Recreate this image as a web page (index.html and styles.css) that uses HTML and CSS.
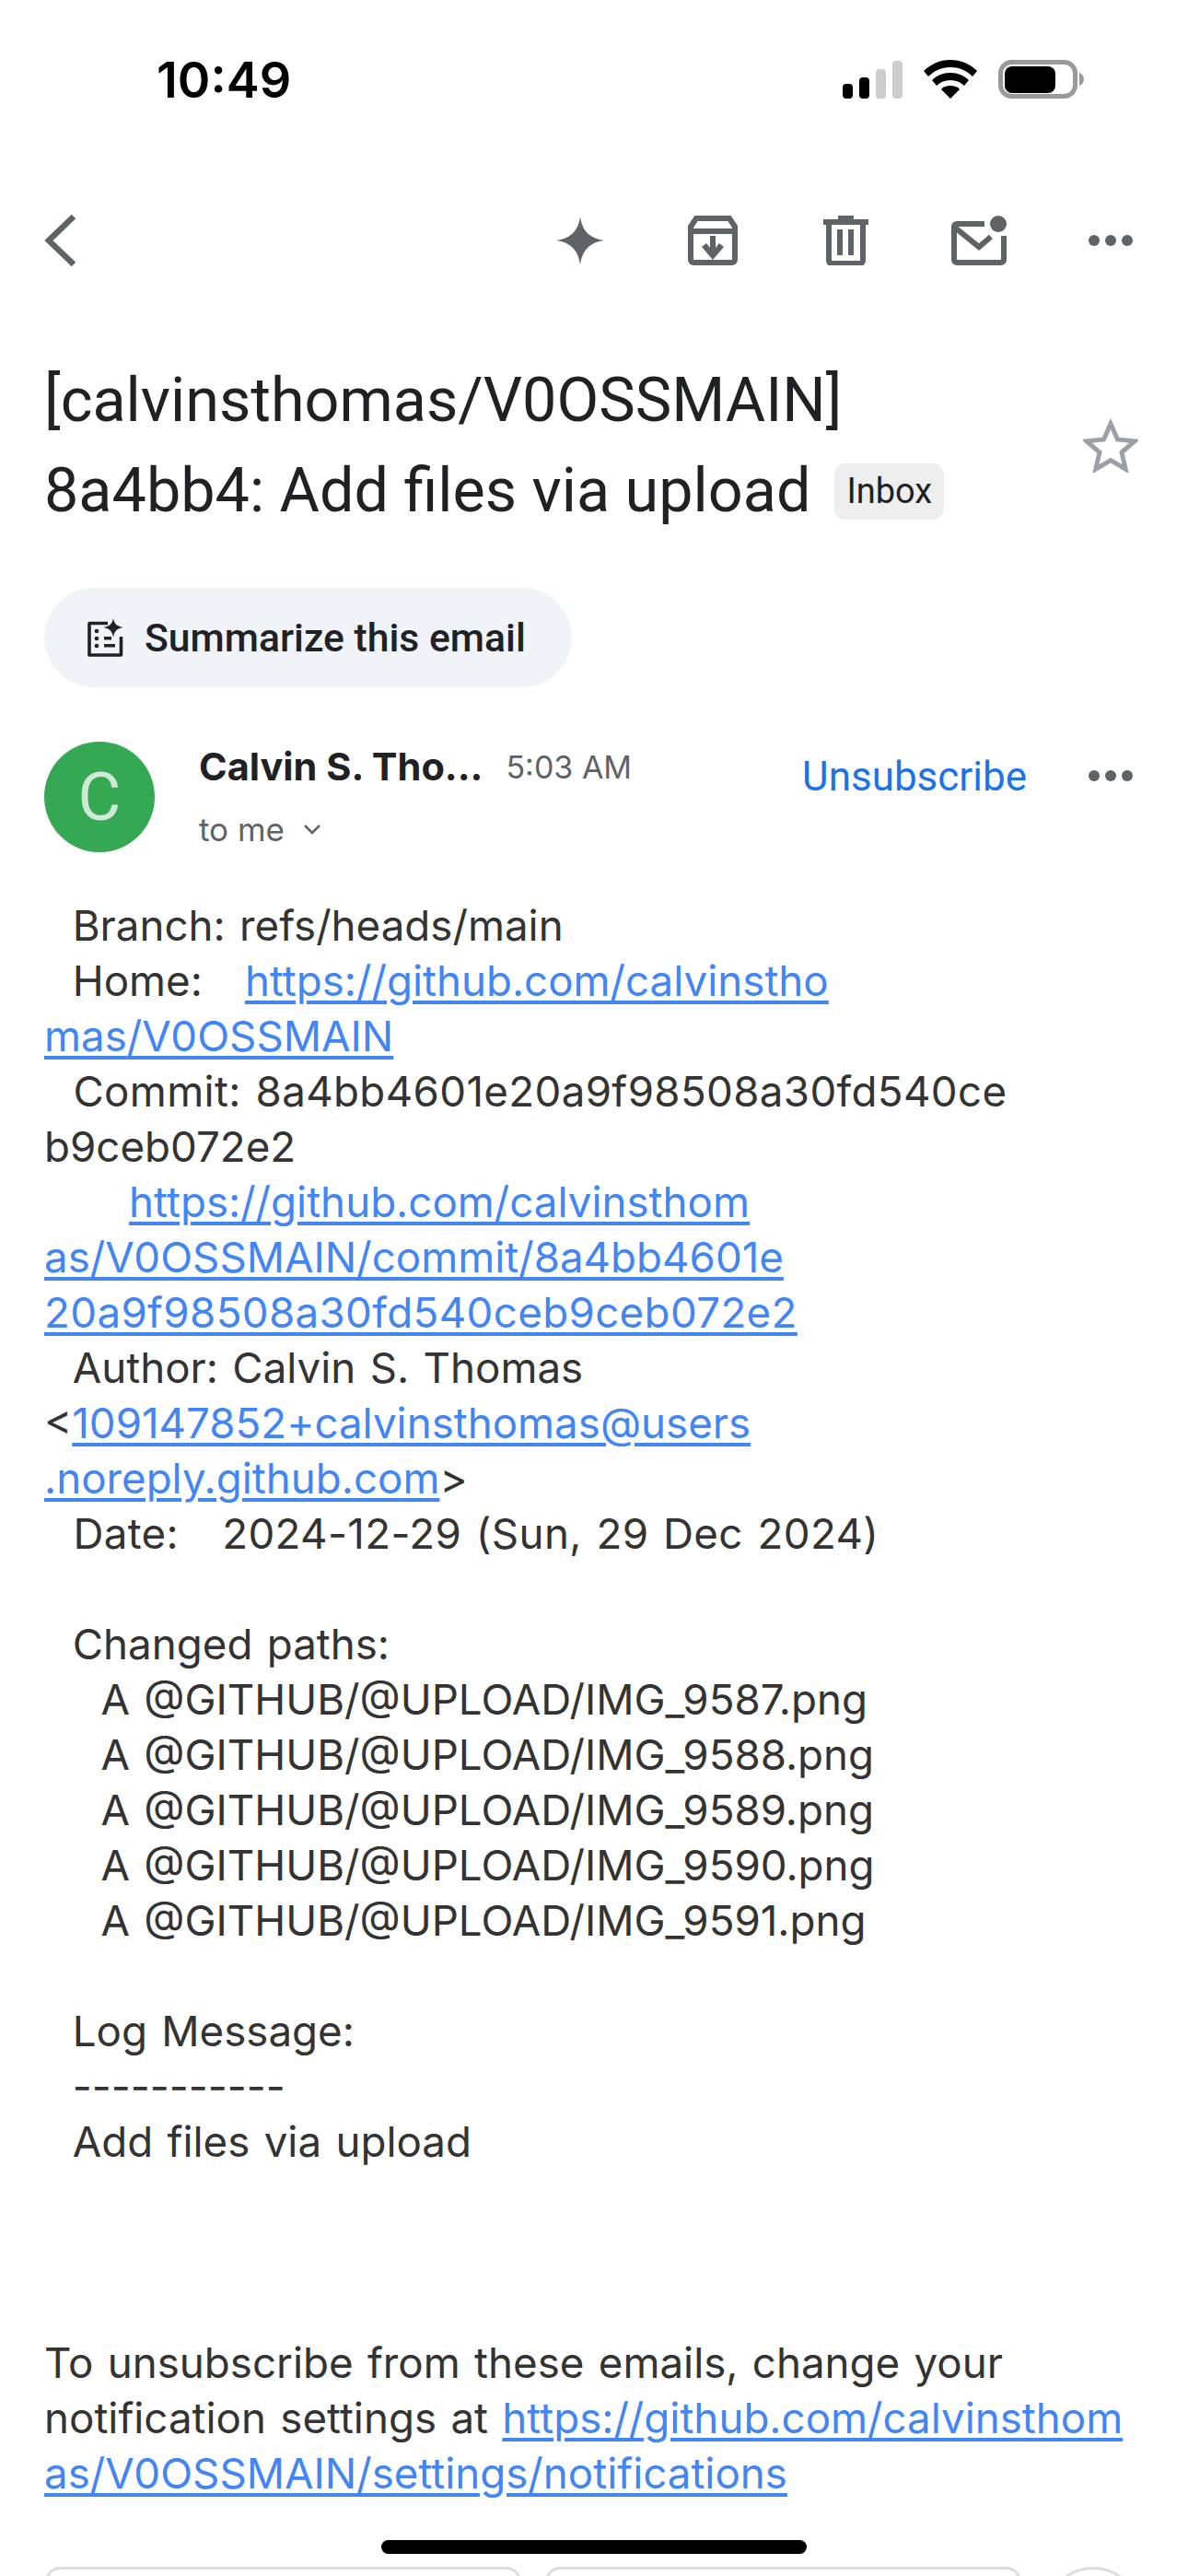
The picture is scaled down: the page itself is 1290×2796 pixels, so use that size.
FILE: index.html

```html
<!DOCTYPE html>
<html lang="en">
<head>
    <meta charset="UTF-8">
    <meta name="viewport" content="width=device-width, initial-scale=1.0">
    <title>[calvinsthomas/V0OSSMAIN] 8a4bb4: Add files via upload</title>
    <link rel="stylesheet" href="styles.css">
</head>
<body>
    <div class="status-bar">
        <span class="clock">10:49</span>
        <div class="status-icons">
            <svg class="signal" width="65" height="41" viewBox="0 0 65 41">
                <rect x="0" y="25" width="11" height="16" rx="4" fill="#000"/>
                <rect x="18" y="18" width="11" height="23" rx="4" fill="#000"/>
                <rect x="36" y="9" width="11" height="32" rx="4" fill="#ccc"/>
                <rect x="54" y="0" width="11" height="41" rx="4" fill="#ccc"/>
            </svg>
            <svg class="wifi" width="58" height="42" viewBox="0 0 58 42">
                <path d="M29 0C18 0 8 4 0 12l5 6C12 11 20 8 29 8s17 3 24 10l5-6C50 4 40 0 29 0z" fill="#000"/>
                <path d="M29 14c-8 0-15 3-20 8l5 6c4-4 9-6 15-6s11 2 15 6l5-6c-5-5-12-8-20-8z" fill="#000"/>
                <path d="M29 28c-4 0-8 1-10 4l10 10 10-10c-2-3-6-4-10-4z" fill="#000"/>
            </svg>
            <svg class="battery" width="93" height="42" viewBox="0 0 93 42">
                <rect x="2.5" y="2.5" width="81" height="37" rx="12" fill="none" stroke="#999" stroke-width="5"/>
                <rect x="7" y="7" width="55" height="29" rx="8" fill="#000"/>
                <path d="M88 14c3 1 5 4 5 7s-2 6-5 7z" fill="#999"/>
            </svg>
        </div>
    </div>

    <div class="toolbar">
        <svg class="back" width="35" height="58" viewBox="0 0 35 58">
            <path d="M32 3L5 29l27 26" fill="none" stroke="#5f6368" stroke-width="6.5"/>
        </svg>
        <div class="toolbar-actions">
            <span class="tool">
                <svg width="52" height="52" viewBox="0 0 52 52"><path d="M26 0c2 15 10 24 26 26-16 2-24 11-26 26-2-15-10-24-26-26 16-2 24-11 26-26z" fill="#5f6368"/></svg>
            </span>
            <span class="tool">
                <svg width="54" height="54" viewBox="0 0 54 54">
                    <path d="M3 12L9 3h36l6 9v36a3 3 0 0 1-3 3H6a3 3 0 0 1-3-3z" fill="none" stroke="#5f6368" stroke-width="6"/>
                    <path d="M3 17h48" stroke="#5f6368" stroke-width="6"/>
                    <path d="M24 22h6v13l4-5 5 4-12 14-12-14 5-4 4 5z" fill="#5f6368"/>
                </svg>
            </span>
            <span class="tool">
                <svg width="49" height="54" viewBox="0 0 49 54">
                    <path d="M16 0h17v4h16v6H0V4h16z" fill="#5f6368"/>
                    <path d="M6 9v40a3 3 0 0 0 3 3h31a3 3 0 0 0 3-3V9" fill="none" stroke="#5f6368" stroke-width="6"/>
                    <path d="M15 15h6v28h-6zM27 15h6v28h-6z" fill="#5f6368"/>
                </svg>
            </span>
            <span class="tool">
                <svg width="60" height="54" viewBox="0 0 60 54">
                    <path d="M36 9H6a3 3 0 0 0-3 3v36a3 3 0 0 0 3 3h48a3 3 0 0 0 3-3V22" fill="none" stroke="#5f6368" stroke-width="6"/>
                    <path d="M4 13l26 21 13-11" fill="none" stroke="#5f6368" stroke-width="6"/>
                    <circle cx="51" cy="9" r="9" fill="#5f6368"/>
                </svg>
            </span>
            <span class="tool tool-last">
                <svg width="48" height="12" viewBox="0 0 48 12"><circle cx="6" cy="6" r="6" fill="#5f6368"/><circle cx="24" cy="6" r="6" fill="#5f6368"/><circle cx="42" cy="6" r="6" fill="#5f6368"/></svg>
            </span>
        </div>
    </div>

    <div class="subject-row">
        <h1 class="subject">[calvinsthomas/V0OSSMAIN]<br>8a4bb4: Add files via upload<span class="chip">Inbox</span></h1>
        <svg class="star" width="60" height="58" viewBox="0 0 60 58">
            <path d="M30 5l7.5 17 18.500 1.800-14 12.200 4.200 18.200L30 44.600 13.800 54.200 18 36 4 23.800 22.500 22z" fill="none" stroke="#9aa0a6" stroke-width="5"/>
        </svg>
    </div>

    <div class="summary">
        <svg width="40" height="42" viewBox="0 0 40 42">
            <path d="M22 5.500H2v34.500h34.500V20" fill="none" stroke="#202124" stroke-width="3.600" stroke-linejoin="round"/>
            <circle cx="10" cy="14" r="2.300" fill="#202124"/>
            <circle cx="10" cy="22" r="2.300" fill="#202124"/>
            <circle cx="10" cy="30" r="2.300" fill="#202124"/>
            <path d="M18 20h8v3.600h-8zM18 28h12v3.600H18z" fill="#202124"/>
            <path d="M28 0c1 6 4 9 11 10-7 1-10 4-11 11-1-7-4-10-11-11 7-1 10-4 11-10z" fill="#202124"/>
        </svg>
        <span>Summarize this email</span>
    </div>

    <div class="sender">
        <div class="avatar">C</div>
        <div class="sender-info">
            <div class="sender-top">
                <span class="sender-name">Calvin S. Tho...</span>
                <span class="sender-time">5:03 AM</span>
            </div>
            <div class="sender-to">to me
                <svg width="20" height="12" viewBox="0 0 20 12"><path d="M2 2l8 8 8-8" fill="none" stroke="#5f6368" stroke-width="2.500"/></svg>
            </div>
        </div>
        <a class="unsubscribe">Unsubscribe</a>
        <svg class="more" width="48" height="12" viewBox="0 0 48 12"><circle cx="6" cy="6" r="6" fill="#5f6368"/><circle cx="24" cy="6" r="6" fill="#5f6368"/><circle cx="42" cy="6" r="6" fill="#5f6368"/></svg>
    </div>

    <div class="message">
        <div class="line">  Branch: refs/heads/main</div>
        <div class="line">  Home:   <a>https://github.com/calvinstho</a></div>
        <div class="line"><a>mas/V0OSSMAIN</a></div>
        <div class="line digits">  Commit: 8a4bb4601e20a9f98508a30fd540ce</div>
        <div class="line">b9ceb072e2</div>
        <div class="line">      <a>https://github.com/calvinsthom</a></div>
        <div class="line"><a>as/V0OSSMAIN/commit/8a4bb4601e</a></div>
        <div class="line digits"><a>20a9f98508a30fd540ceb9ceb072e2</a></div>
        <div class="line">  Author: Calvin S. Thomas</div>
        <div class="line">&lt;<a>109147852+calvinsthomas@users</a></div>
        <div class="line"><a>.noreply.github.com</a>&gt;</div>
        <div class="line digits">  Date:   2024-12-29 (Sun, 29 Dec 2024)</div>
        <div class="line"></div>
        <div class="line">  Changed paths:</div>
        <div class="line">    A @GITHUB/@UPLOAD/IMG_9587.png</div>
        <div class="line">    A @GITHUB/@UPLOAD/IMG_9588.png</div>
        <div class="line">    A @GITHUB/@UPLOAD/IMG_9589.png</div>
        <div class="line">    A @GITHUB/@UPLOAD/IMG_9590.png</div>
        <div class="line">    A @GITHUB/@UPLOAD/IMG_9591.png</div>
        <div class="line"></div>
        <div class="line">  Log Message:</div>
        <div class="line">  -----------</div>
        <div class="line">  Add files via upload</div>
        <div class="line"></div>
        <div class="line"></div>
        <div class="line"></div>
        <div class="line">To unsubscribe from these emails, change your</div>
        <div class="line">notification settings at <a>https://github.com/calvinsthom</a></div>
        <div class="line"><a>as/V0OSSMAIN/settings/notifications</a></div>
    </div>

    <div class="reply-row">
        <div class="reply-btn"></div>
        <div class="reply-btn"></div>
        <div class="emoji-btn"></div>
    </div>

    <div class="home-bar"></div>
</body>
</html>
```

FILE: styles.css

```css
html, body {
    margin: 0;
    padding: 0;
}
body {
    position: relative;
    width: 1290px;
    height: 2796px;
    overflow: hidden;
    background-color: white;
    font-family: "Inter", Arial, sans-serif;
    color: #202124;
}
.status-bar {
    display: flex;
    justify-content: space-between;
    align-items: center;
    height: 84px;
    padding: 44px 113px 0 170px;
}
.clock {
    font-size: 54px;
    font-weight: 600;
    color: #000;
}
.status-icons {
    display: flex;
    align-items: center;
}
.wifi {
    margin-left: 23px;
}
.battery {
    margin-left: 23px;
}
.toolbar {
    display: flex;
    justify-content: space-between;
    align-items: center;
    height: 62px;
    margin-top: 102px;
    padding: 0 10px 0 48px;
}
.toolbar-actions {
    display: flex;
    align-items: center;
}
.tool {
    display: flex;
    justify-content: center;
    align-items: center;
    width: 144.5px;
    box-sizing: border-box;
}
.tool-last {
    padding-right: 3px;
}
.subject-row {
    display: flex;
    justify-content: space-between;
    margin-top: 93px;
    padding: 0 54px 0 48px;
}
.star {
    margin-top: 70px;
}
.subject {
    margin: 0;
    font-family: "Roboto", sans-serif;
    font-size: 66.500px;
    font-weight: 400;
    line-height: 98px;
    color: #202124;
}
.chip {
    display: inline-block;
    margin-left: 26px;
    padding: 0 13px;
    background-color: #eee;
    border-radius: 12px;
    font-size: 38px;
    line-height: 61px;
    vertical-align: 9px;
}
.summary {
    display: inline-flex;
    align-items: center;
    gap: 22px;
    height: 108px;
    margin: 57px 0 0 48px;
    padding: 0 50px 0 47px;
    background-color: #f0f4f9;
    border-radius: 54px;
    font-family: "Roboto", sans-serif;
    font-size: 42.700px;
    font-weight: 500;
}
.sender {
    display: flex;
    align-items: flex-start;
    margin-top: 59px;
    padding: 0 60px 0 48px;
}
.avatar {
    display: flex;
    justify-content: center;
    align-items: center;
    width: 120px;
    height: 120px;
    border-radius: 50%;
    background-color: #34a853;
    color: #cfe9d6;
    font-family: "Roboto", sans-serif;
    font-size: 72px;
}
.sender-info {
    flex: 1;
    margin-left: 48px;
}
.sender-top {
    display: flex;
    align-items: center;
    gap: 25px;
    height: 54px;
}
.sender-name {
    font-size: 41.500px;
    font-weight: 700;
}
.sender-time {
    font-size: 34px;
    color: #5f6368;
}
.sender-to {
    display: flex;
    align-items: center;
    gap: 20px;
    margin-top: 20px;
    font-size: 35px;
    color: #5f6368;
}
.unsubscribe {
    margin-top: 12px;
    font-family: "Roboto", sans-serif;
    font-size: 44px;
    font-weight: 400;
    color: #1a73e8;
}
.more {
    margin: 31px 0 0 67px;
}
.message {
    margin-top: 50px;
    padding-left: 48px;
    font-size: 45.700px;
    word-spacing: 2.500px;
    color: #333;
}
.line {
    height: 60px;
    line-height: 60px;
    white-space: pre;
}
.digits {
    letter-spacing: 0.35px;
}
.message a {
    color: #4285f4;
    text-decoration: underline;
    text-decoration-thickness: 4px;
    text-underline-offset: 5px;
}
.reply-row {
    position: absolute;
    top: 2786px;
    left: 49px;
    display: flex;
    gap: 26px;
}
.reply-btn {
    width: 517px;
    height: 110px;
    box-sizing: border-box;
    border: 3px solid #dadce0;
    border-radius: 16px;
}
.emoji-btn {
    width: 104px;
    height: 104px;
    box-sizing: border-box;
    border: 3px solid #dadce0;
    border-radius: 50%;
}
.home-bar {
    position: absolute;
    top: 2757px;
    left: 414px;
    width: 462px;
    height: 15px;
    background-color: #000;
    border-radius: 8px;
}
```
